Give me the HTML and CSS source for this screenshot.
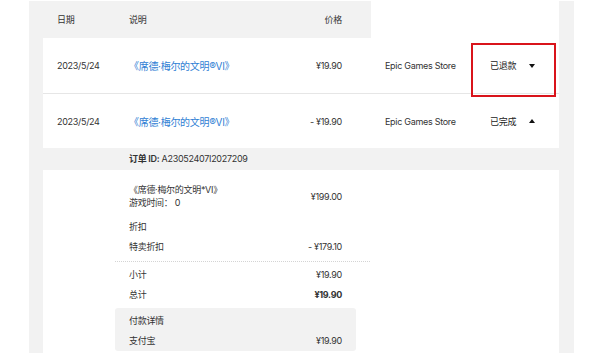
FILE: index.html
```html
<!DOCTYPE html>
<html lang="zh-CN">

<head>
    <meta charset="UTF-8" />
    <meta name="viewport" content="width=device-width, initial-scale=1" />
    <title>交易记录</title>
    <link rel="stylesheet" href="styles.css">
</head>

<body>
    <div class="panel">
        <div class="fila fila-cabecera">
            <div class="celda">日期</div>
            <div class="celda">说明</div>
            <div class="celda celda-precio">价格</div>
            <div class="celda celda-blanca"></div>
            <div class="celda celda-blanca"></div>
        </div>

        <div class="fila fila-compra con-borde">
            <div class="celda">2023/5/24</div>
            <div class="celda"><a class="enlace" href="#">《席德·梅尔的文明®VI》</a></div>
            <div class="celda celda-precio">¥19.90</div>
            <div class="celda">Epic Games Store</div>
            <div class="celda celda-estado">
                <span>已退款</span>
                <span class="flecha flecha-abajo"></span>
                <div class="marco-rojo"></div>
            </div>
        </div>

        <div class="fila fila-compra">
            <div class="celda">2023/5/24</div>
            <div class="celda"><a class="enlace" href="#">《席德·梅尔的文明®VI》</a></div>
            <div class="celda celda-precio">- ¥19.90</div>
            <div class="celda">Epic Games Store</div>
            <div class="celda celda-estado">
                <span>已完成</span>
                <span class="flecha flecha-arriba"></span>
            </div>
        </div>

        <div class="pedido-id"><b>订单 ID:</b> A23052407I2027209</div>

        <div class="detalle">
            <div class="linea-detalle articulo">
                <div>
                    <div>《席德·梅尔的文明*VI》</div>
                    <div>游戏时间： 0</div>
                </div>
                <div>¥199.00</div>
            </div>
            <div class="linea-detalle primera-descuento">
                <div>折扣</div>
                <div></div>
            </div>
            <div class="linea-detalle">
                <div>特卖折扣</div>
                <div>- ¥179.10</div>
            </div>
            <div class="separador"></div>
            <div class="linea-detalle">
                <div>小计</div>
                <div>¥19.90</div>
            </div>
            <div class="linea-detalle total">
                <div>总计</div>
                <div>¥19.90</div>
            </div>
            <div class="caja-pago">
                <div class="linea-detalle">
                    <div>付款详情</div>
                    <div></div>
                </div>
                <div class="linea-detalle">
                    <div>支付宝</div>
                    <div>¥19.90</div>
                </div>
            </div>
        </div>
    </div>
</body>

</html>
```

FILE: styles.css
```css
body {
    margin: 0;
    background-color: white;
    font-family: Inter, "Noto Sans CJK SC", sans-serif;
    font-size: 9px;
    letter-spacing: -0.3px;
    color: #333;
}

.panel {
    margin: 1px 0 0 29px;
    width: 516px;
    padding: 0 15px 0 14px;
    background-color: #f2f2f2;
}

.fila {
    display: grid;
    grid-template-columns: 72px 185px 71px 100px 88px;
}

.celda {
    display: flex;
    align-items: center;
    padding-left: 14px;
}

.fila-cabecera {
    height: 37px;
    margin-left: -14px;
    grid-template-columns: 86px 185px 71px 100px 88px;
}

.fila-cabecera .celda:first-child {
    padding-left: 28px;
}

.celda-precio {
    justify-content: flex-end;
    padding-left: 0;
    padding-right: 29px;
}

.celda-blanca {
    background-color: white;
}

.fila-compra {
    height: 54px;
    background-color: white;
}

.con-borde {
    height: 55px;
    border-bottom: 1px solid #e6e6e6;
}

.enlace {
    color: #2f80d4;
    font-size: 10px;
    text-decoration: none;
}

.celda-estado {
    position: relative;
    padding-left: 19px;
    color: #222;
}

.flecha {
    margin-left: 13px;
    width: 0;
    height: 0;
    border-left: 3.5px solid transparent;
    border-right: 3.5px solid transparent;
}

.flecha-abajo {
    border-top: 4px solid #111;
}

.flecha-arriba {
    border-bottom: 4px solid #111;
}

.marco-rojo {
    position: absolute;
    top: 5px;
    left: 0;
    width: 81px;
    height: 50px;
    border: 2px solid #d9141b;
}

.pedido-id {
    height: 22px;
    line-height: 22px;
    padding-left: 86px;
}

.pedido-id b {
    font-weight: 600;
}

.detalle {
    background-color: white;
    padding: 13px 0 0 72px;
    height: 170px;
}

.linea-detalle {
    width: 213px;
    padding: 0 14px;
    display: flex;
    justify-content: space-between;
    align-items: center;
    line-height: 20px;
}

.articulo {
    line-height: 13px;
}

.primera-descuento {
    margin-top: 8px;
}

.total {
    font-weight: 700;
}

.total div:first-child {
    font-weight: 400;
}

.separador {
    width: 255px;
    margin: 4px 0 3px;
    border-top: 1px dotted #d4d4d4;
}

.caja-pago {
    width: 241px;
    margin-top: 3px;
    padding-top: 3px;
    background-color: #f2f2f2;
    border-radius: 3px;
}
```
